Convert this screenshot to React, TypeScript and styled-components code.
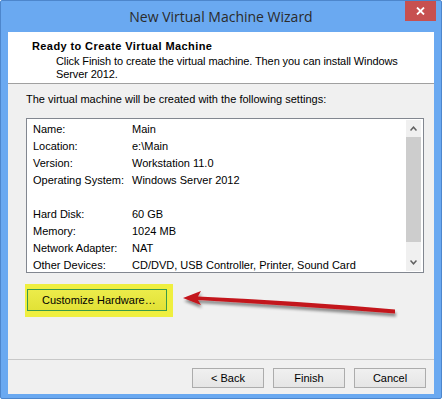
import React from 'react'
import styled, { createGlobalStyle } from 'styled-components'

const GlobalStyle = createGlobalStyle`
  html, body {
    margin: 0;
    padding: 0;
    background: #ffffff;
  }
  body {
    font-family: "Liberation Sans", Arial, sans-serif;
    font-size: 11px;
    color: #000;
  }
`

const Frame = styled.div`
  position: relative;
  box-sizing: border-box;
  width: 442px;
  height: 399px;
  background: #6aa9f1;
  border: 1px solid #4d86cc;
  border-radius: 2px;
  padding: 0 7px 4px 7px;
  display: flex;
  flex-direction: column;
`

const TitleBar = styled.div`
  height: 30px;
  display: flex;
  align-items: center;
  justify-content: center;
  font-family: "Open Sans", "Noto Sans", sans-serif;
  font-size: 14px;
  color: #2b2b2b;
  padding-bottom: 1px;
`

const CloseButton = styled.div`
  position: absolute;
  top: 0;
  right: 5px;
  width: 31px;
  height: 20px;
  background: #c75050;
  display: flex;
  align-items: center;
  justify-content: center;
`

const Client = styled.div`
  flex: 1;
  background: #f0f0f0;
  display: flex;
  flex-direction: column;
  position: relative;
`

const Header = styled.div`
  height: 52px;
  box-sizing: border-box;
  background: #ffffff;
  border-bottom: 1px solid #a0a0a0;
  padding: 7px 0 0 24px;
`

const HeaderTitle = styled.div`
  font-weight: bold;
  font-size: 11px;
  line-height: 14px;
  letter-spacing: 0.4px;
`

const HeaderText = styled.div`
  padding-left: 24px;
  line-height: 13px;
  margin-top: 2px;
  letter-spacing: -0.1px;
`

const Body = styled.div`
  flex: 1;
  padding: 8px 10px 0 18px;
  display: flex;
  flex-direction: column;
`

const Intro = styled.div`
  line-height: 14px;
  margin-bottom: 12px;
`

const ListBox = styled.div`
  height: 155px;
  box-sizing: border-box;
  border: 1px solid #828790;
  background: #ffffff;
  display: flex;
  overflow: hidden;
`

const Rows = styled.div`
  flex: 1;
  padding: 1px 0 0 6px;
`

const Row = styled.div`
  display: grid;
  grid-template-columns: 99px 1fr;
  height: 17px;
  align-items: center;
  white-space: nowrap;
`

const ScrollBar = styled.div`
  width: 15px;
  margin: 1px 2px 1px 0;
  background: #f0f0f0;
  display: flex;
  flex-direction: column;
  align-items: center;
`

const ScrollArrow = styled.div`
  height: 17px;
  display: flex;
  align-items: center;
  justify-content: center;
`

const Thumb = styled.div`
  width: 15px;
  height: 105px;
  background: #cdcdcd;
`

const Spacer = styled.div`
  flex: 1;
`

const ActionRow = styled.div`
  position: relative;
  margin-top: 11px;
  height: 36px;
`

const Highlight = styled.div`
  display: inline-block;
  background: #efef3f;
  padding: 5px 6px 6px 2px;
  margin-left: -1px;
`

const CustomizeButton = styled.div`
  width: 140px;
  height: 22px;
  box-sizing: border-box;
  border: 1px solid #3a9a4a;
  background: linear-gradient(#ecec4a, #e2e236);
  display: flex;
  align-items: center;
  padding-left: 14px;
`

const Arrow = styled.svg`
  position: absolute;
  left: 142px;
  top: 0;
  overflow: visible;
`

const Footer = styled.div`
  border-top: 1px solid #c8c8c8;
  margin-top: auto;
  height: 35px;
  display: flex;
  justify-content: flex-end;
  align-items: flex-start;
  gap: 9px;
  padding: 8px 8px 0 0;
  box-sizing: border-box;
`

const WizardButton = styled.div`
  width: 72px;
  height: 20px;
  box-sizing: border-box;
  border: 1px solid #acacac;
  background: linear-gradient(#f0f0f0, #e5e5e5);
  display: flex;
  align-items: center;
  justify-content: center;
`

const settings: [string, string][] = [
  ['Name:', 'Main'],
  ['Location:', 'e:\\Main'],
  ['Version:', 'Workstation 11.0'],
  ['Operating System:', 'Windows Server 2012'],
  ['', ''],
  ['Hard Disk:', '60 GB'],
  ['Memory:', '1024 MB'],
  ['Network Adapter:', 'NAT'],
  ['Other Devices:', 'CD/DVD, USB Controller, Printer, Sound Card'],
]

export default function App() {
  return (
    <>
      <GlobalStyle />
      <Frame>
        <TitleBar>New Virtual Machine Wizard</TitleBar>
        <CloseButton>
          <svg width="9" height="8" viewBox="0 0 9 8">
            <path d="M1 0.5 L8 7.5 M8 0.5 L1 7.5" stroke="#fff" strokeWidth="1.8" />
          </svg>
        </CloseButton>
        <Client>
          <Header>
            <HeaderTitle>Ready to Create Virtual Machine</HeaderTitle>
            <HeaderText>
              Click Finish to create the virtual machine. Then you can install Windows
              <br />
              Server 2012.
            </HeaderText>
          </Header>
          <Body>
            <Intro>The virtual machine will be created with the following settings:</Intro>
            <ListBox>
              <Rows>
                {settings.map(([k, v], i) => (
                  <Row key={i}>
                    <span>{k}</span>
                    <span>{v}</span>
                  </Row>
                ))}
              </Rows>
              <ScrollBar>
                <ScrollArrow>
                  <svg width="7" height="5" viewBox="0 0 7 5">
                    <path d="M0.5 4.5 L3.5 1.2 L6.5 4.5" fill="none" stroke="#606060" strokeWidth="1.5" />
                  </svg>
                </ScrollArrow>
                <Thumb />
                <Spacer />
                <ScrollArrow>
                  <svg width="7" height="5" viewBox="0 0 7 5">
                    <path d="M0.5 0.5 L3.5 3.8 L6.5 0.5" fill="none" stroke="#606060" strokeWidth="1.5" />
                  </svg>
                </ScrollArrow>
              </ScrollBar>
            </ListBox>
            <ActionRow>
              <Highlight>
                <CustomizeButton>Customize Hardware…</CustomizeButton>
              </Highlight>
              <Arrow width="240" height="40" viewBox="0 0 240 40">
                <defs>
                  <filter id="sh" x="-10%" y="-50%" width="120%" height="200%">
                    <feGaussianBlur in="SourceAlpha" stdDeviation="1.6" />
                    <feOffset dx="1" dy="3" result="b" />
                    <feComponentTransfer>
                      <feFuncA type="linear" slope="0.45" />
                    </feComponentTransfer>
                    <feMerge>
                      <feMergeNode />
                      <feMergeNode in="SourceGraphic" />
                    </feMerge>
                  </filter>
                </defs>
                <path
                  d="M15 14 L33 7 L30 12.5 Q130 17 227 25.5 L227 29.5 Q130 22 30 16 L33 21 Z"
                  fill="#c3161c"
                  filter="url(#sh)"
                />
              </Arrow>
            </ActionRow>
          </Body>
          <Footer>
            <WizardButton>&lt; Back</WizardButton>
            <WizardButton>Finish</WizardButton>
            <WizardButton>Cancel</WizardButton>
          </Footer>
        </Client>
      </Frame>
    </>
  )
}
